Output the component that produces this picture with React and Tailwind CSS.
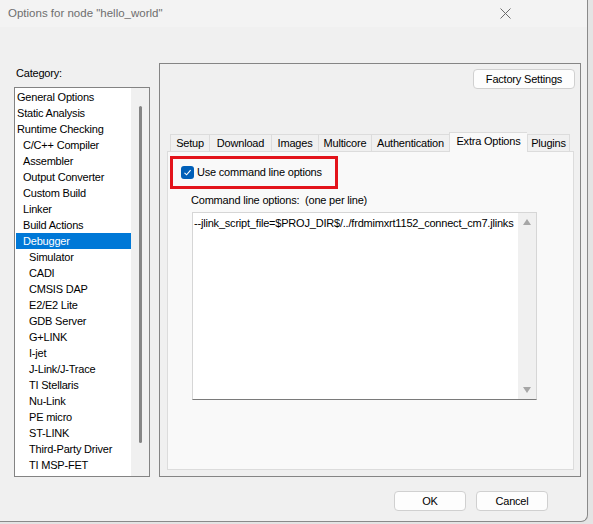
import React from 'react';

// tree entries: [label, indent level]
const categories = [
  ['General Options', 0],
  ['Static Analysis', 0],
  ['Runtime Checking', 0],
  ['C/C++ Compiler', 1],
  ['Assembler', 1],
  ['Output Converter', 1],
  ['Custom Build', 1],
  ['Linker', 1],
  ['Build Actions', 1],
  ['Debugger', 1],
  ['Simulator', 2],
  ['CADI', 2],
  ['CMSIS DAP', 2],
  ['E2/E2 Lite', 2],
  ['GDB Server', 2],
  ['G+LINK', 2],
  ['I-jet', 2],
  ['J-Link/J-Trace', 2],
  ['TI Stellaris', 2],
  ['Nu-Link', 2],
  ['PE micro', 2],
  ['ST-LINK', 2],
  ['Third-Party Driver', 2],
  ['TI MSP-FET', 2],
];

const tabs = [
  { label: 'Setup', w: 'w-[39px]' },
  { label: 'Download', w: 'w-[62px]' },
  { label: 'Images', w: 'w-[47px]' },
  { label: 'Multicore', w: 'w-[53px]' },
  { label: 'Authentication', w: 'w-[78px]' },
  { label: 'Extra Options', w: 'w-[78px]', active: true },
  { label: 'Plugins', w: 'w-[43px]' },
];

const indent = ['pl-[1px]', 'pl-[7px]', 'pl-[13px]'];

function Button({ children, className = '' }) {
  return (
    <div
      className={`h-[20px] flex items-center justify-center rounded-[4px] border border-[#d0d0d0] bg-[#fdfdfd] ${className}`}
    >
      {children}
    </div>
  );
}

function CategoryList() {
  return (
    <div className="flex h-[390px] border border-[#838383] bg-white">
      <div className="w-[116px] pt-[1px] pl-[1px]">
        {categories.map(([name, level]) => {
          const selected = name === 'Debugger';
          return (
            <div
              key={name}
              className={`h-[16px] leading-[16px] whitespace-nowrap ${indent[level]} ${
                selected ? 'bg-[#0078d7] text-white' : ''
              }`}
            >
              {name}
            </div>
          );
        })}
      </div>
      <div className="w-[18px] bg-[#f0f0f0] flex justify-center">
        <div className="mt-[18px] w-[3px] h-[337px] rounded-full bg-[#858585]" />
      </div>
    </div>
  );
}

function TabStrip() {
  return (
    <div className="flex items-end h-[19px] ml-[10px]">
      {tabs.map((t, i) => (
        <div
          key={t.label}
          className={`${t.w} flex items-center justify-center border-t border-l border-[#dcdcdc] whitespace-nowrap ${
            i === tabs.length - 1 ? 'border-r' : ''
          } ${
            t.active
              ? 'h-[20px] -mb-px bg-[#f9f9f9] relative z-10 pb-[3px]'
              : 'h-[17px] bg-[#f0f0f0]'
          }`}
        >
          {t.label}
        </div>
      ))}
    </div>
  );
}

function CommandLineBox() {
  return (
    <div className="ml-[24px] mt-[4px] w-[345px] h-[188px] flex border border-[#d6d6d6] border-b-[#7a7a7a] bg-white">
      <div className="flex-1 overflow-hidden whitespace-nowrap pl-[1px] pt-[2px] leading-[16px]">
        --jlink_script_file=$PROJ_DIR$/../frdmimxrt1152_connect_cm7.jlinks
      </div>
      <div className="w-[18px] bg-[#f0f0f0] flex flex-col items-center justify-between py-[6px]">
        <svg width="8" height="6" viewBox="0 0 8 6">
          <path d="M4 0 L8 6 L0 6 Z" fill="#a6a6a6" />
        </svg>
        <svg width="8" height="6" viewBox="0 0 8 6">
          <path d="M0 0 L8 0 L4 6 Z" fill="#a6a6a6" />
        </svg>
      </div>
    </div>
  );
}

export default function App() {
  return (
    <div className="w-[593px] h-[524px] bg-[#e4e4e4] text-[11px] tracking-[-0.2px] text-black font-['Liberation_Sans',Arial,sans-serif]">
      <div className="w-[588px] h-[522px] flex flex-col bg-[#f0f0f0] border-r border-b border-[#8a8a8a] rounded-br-[7px] overflow-hidden">
        {/* title bar */}
        <div className="h-[27px] flex items-center justify-between bg-[#f3f3f3] pl-[8px] pr-[76px]">
          <span className="text-[#6e6e6e] text-[11.5px] tracking-normal">Options for node "hello_world"</span>
          <svg width="11" height="11" viewBox="0 0 11 11">
            <path d="M0.5 0.5 L10.5 10.5 M10.5 0.5 L0.5 10.5" stroke="#6b6b6b" strokeWidth="1" />
          </svg>
        </div>

        {/* main area */}
        <div className="flex items-start pl-[14px] pt-[36px]">
          <div className="w-[136px]">
            <div className="mt-[2px] h-[16px] leading-[16px] pl-[2px]">Category:</div>
            <div className="mt-[6px]">
              <CategoryList />
            </div>
          </div>

          <div className="ml-[9px] w-[422px] h-[414px] border border-[#858585] flex flex-col">
            <div className="flex justify-end pt-[5px] pr-[5px]">
              <Button className="w-[102px]">Factory Settings</Button>
            </div>

            <div className="mt-[43px]">
              <TabStrip />
            </div>

            <div className="ml-[7px] mr-[6px] mb-[6px] flex-1 border border-[#dcdcdc] bg-[#f9f9f9] flex flex-col">
              <div className="ml-[2px] mt-[4px] w-[168px] h-[33px] border-[3px] border-[#e3131b] flex items-center pl-[8px]">
                <div className="w-[13px] h-[13px] rounded-[3px] bg-[#005fb8] flex items-center justify-center">
                  <svg width="9" height="9" viewBox="0 0 9 9">
                    <path d="M1.5 4.8 L3.6 6.8 L7.6 2.2" stroke="white" strokeWidth="1.1" fill="none" />
                  </svg>
                </div>
                <span className="ml-[3px] whitespace-nowrap">Use command line options</span>
              </div>

              <div className="ml-[23px] mt-[3px] h-[16px] leading-[16px] whitespace-pre">
                Command line options:  (one per line)
              </div>

              <CommandLineBox />
            </div>
          </div>
        </div>

        {/* dialog buttons */}
        <div className="flex justify-end gap-[10px] pr-[39px] mt-[14px]">
          <Button className="w-[72px]">OK</Button>
          <Button className="w-[72px]">Cancel</Button>
        </div>
      </div>
    </div>
  );
}
